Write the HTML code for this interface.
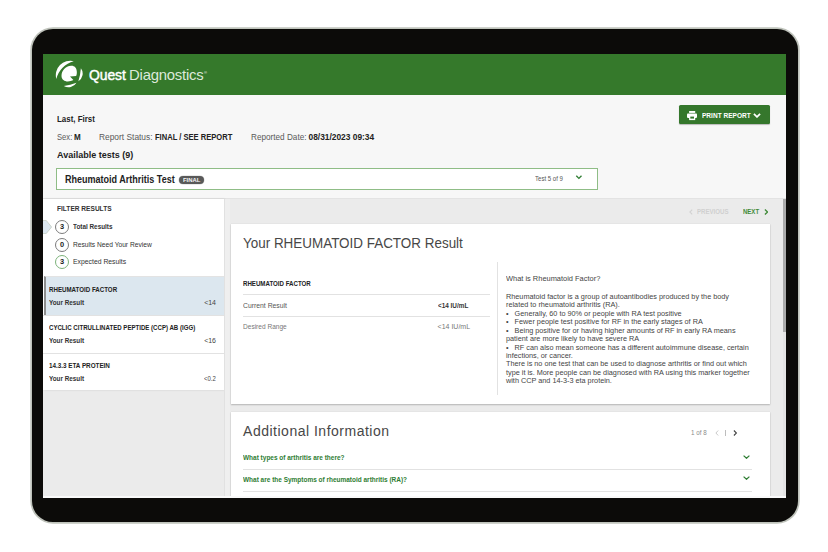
<!DOCTYPE html>
<html><head><meta charset="utf-8">
<style>
*{margin:0;padding:0;box-sizing:border-box}
html,body{width:828px;height:552px;overflow:hidden;background:#fff}
body{font-family:"Liberation Sans",sans-serif;position:relative;color:#222}
.a{position:absolute;white-space:nowrap;line-height:1}
#frame{position:absolute;left:31.8px;top:28.8px;width:766.2px;height:493.2px;background:#0c0b09;border-radius:21px;box-shadow:0 0 0 1.7px #bfc3bb}
#screen{position:absolute;left:43px;top:54px;width:743px;height:443.5px;background:#ebebeb;overflow:hidden}
#hdr{position:absolute;left:0;top:0;width:743px;height:41px;background:#35792b;z-index:2}
#info{position:absolute;left:0;top:40px;width:743px;height:104px;background:#f7f7f7}
b{font-weight:bold}
.g{color:#555}
#side{position:absolute;left:0;top:145px;width:181px;height:191px;background:#fff;box-shadow:1px 0 2px rgba(0,0,0,.12)}
.circ{position:absolute;width:14px;height:14px;border-radius:50%;border:1px solid #7c7c7c;background:#fff;font-size:7.4px;font-weight:bold;text-align:center;line-height:12px;color:#222}
.item{position:absolute;left:0;width:181px;height:37px;background:#fff;border-top:1px solid #e2e2e2}
.card{position:absolute;background:#fff;box-shadow:0 1px 1.5px rgba(0,0,0,.22),0 0 1px rgba(0,0,0,.12)}
.hr{position:absolute;height:1px;background:#e2e2e2}
.rt{position:absolute;left:505.9px;font-size:8px;line-height:8.48px;color:#444;white-space:nowrap}
</style></head><body>
<div id="frame"></div>
<div id="screen">
  <div id="hdr">
    <svg class="a" style="left:9px;top:3px" width="34" height="34" viewBox="0 0 34 34">
      <path d="M4.3 22 A14.5 14.5 0 0 1 21.8 4.2 A24 24 0 0 0 4.3 22 Z" fill="#fff"/>
      <path d="M28.9 11.3 A9 9 0 0 1 26.4 24.3 A60 60 0 0 0 28.9 11.3 Z" fill="#fff"/>
      <path d="M24.5 25.7 A9.2 9.2 0 0 1 11.8 28.9 A60 60 0 0 0 24.5 25.7 Z" fill="#fff"/>
      <path d="M19.2 8.8 C22.2 8.6 24.6 10.8 24.8 14.5 C25 16.8 24.6 18 24.1 18.9 L18 19.6 L21.4 23.1 C19.6 24.2 17 24.6 14.6 24.4 C11.2 24.1 9.4 21.6 9.5 18.6 C9.7 13.8 13.2 9.2 19.2 8.8 Z" fill="#fff"/>
    </svg>
    <div class="a" style="left:45.5px;top:13.5px;font-size:14.5px;color:#fff;-webkit-text-stroke:0.45px #fff;letter-spacing:-0.1px;transform:scaleX(0.96);transform-origin:0 0">Quest</div>
    <div class="a" style="left:86px;top:13.8px;font-size:14.5px;color:#dde9da;letter-spacing:-0.2px;transform:scaleX(1.025);transform-origin:0 0">Diagnostics</div>
    <div class="a" style="left:161px;top:16.5px;font-size:4px;color:#fff">®</div>
  </div>
  <div id="info">
    <div class="a" style="left:13.8px;top:20.6px;font-size:8.8px;font-weight:bold;transform:scaleX(0.9);transform-origin:0 0">Last, First</div>
    <div class="a" style="left:13.8px;top:38.6px;font-size:8.4px;color:#5a5a5a;transform:scaleX(0.91);transform-origin:0 0">Sex:</div>
    <div class="a" style="left:31.2px;top:38.6px;font-size:8.4px;font-weight:bold;transform:scaleX(0.96);transform-origin:0 0">M</div>
    <div class="a" style="left:56px;top:38.6px;font-size:8.4px;color:#5a5a5a">Report Status:</div>
    <div class="a" style="left:111.6px;top:38.6px;font-size:8.4px;font-weight:bold;transform:scaleX(0.904);transform-origin:0 0">FINAL / SEE REPORT</div>
    <div class="a" style="left:207.9px;top:38.6px;font-size:8.4px;color:#5a5a5a;transform:scaleX(0.977);transform-origin:0 0">Reported Date:</div>
    <div class="a" style="left:265.5px;top:38.6px;font-size:8.4px;font-weight:bold">08/31/2023 09:34</div>
    <div class="a" style="left:13.8px;top:56.2px;font-size:9.8px;font-weight:bold;transform:scaleX(0.92);transform-origin:0 0">Available tests (9)</div>
    <!-- print button -->
    <div class="a" style="left:636px;top:11.3px;width:91px;height:18.6px;background:#35772c;border-radius:1.5px;box-shadow:0 1px 1px rgba(0,0,0,.25)"></div>
    <svg class="a" style="left:643px;top:16px" width="12" height="11" viewBox="686 110 12 11">
      <rect x="689.1" y="111" width="6.1" height="1.9" fill="#fff"/>
      <rect x="687" y="113.5" width="10" height="4.4" rx="0.8" fill="#fff"/>
      <rect x="689.1" y="116" width="6.1" height="4.1" fill="#fff"/>
      <rect x="690.3" y="116.6" width="3.7" height="2" fill="#35772c"/>
    </svg>
    <div class="a" style="left:658.9px;top:17.5px;font-size:7px;font-weight:bold;color:#fff;transform:scaleX(0.935);transform-origin:0 0">PRINT REPORT</div>
    <svg class="a" style="left:710px;top:18.8px" width="8" height="5" viewBox="0 0 8 5"><path d="M0.9 0.9 L4 3.9 L7.1 0.9" fill="none" stroke="#fff" stroke-width="1.7"/></svg>
    <!-- test selector -->
    <div class="a" style="left:13.4px;top:73.7px;width:542px;height:22.8px;background:#fff;border:1px solid #8fbd86;border-bottom-width:1.6px"></div>
    <div class="a" style="left:21.9px;top:81px;font-size:10.2px;font-weight:bold;transform:scaleX(0.885);transform-origin:0 0">Rheumatoid Arthritis Test</div>
    <div class="a" style="left:136.2px;top:82.2px;width:24.6px;height:8px;border-radius:4px;background:#595959;box-shadow:0 0 0 0.6px #d8d8d8"></div><div class="a" style="left:139.6px;top:83.4px;font-size:6.2px;font-weight:bold;color:#f4f4f4;line-height:6px;transform:scaleX(0.95);transform-origin:0 0">FINAL</div>
    <div class="a" style="left:491.8px;top:81.5px;font-size:6.5px;color:#555;transform:scaleX(0.93);transform-origin:0 0">Test 5 of 9</div>
    <svg class="a" style="left:532px;top:80.6px" width="8" height="5" viewBox="0 0 8 5"><path d="M1.3 0.8 L3.9 3.4 L6.5 0.8" fill="none" stroke="#2e7d32" stroke-width="1.35"/></svg>
  </div>

  <div class="a" style="left:0;top:144px;width:743px;height:1px;background:#e3e3e3"></div>
  <!-- sidebar -->
  <div id="side">
    <div class="a" style="left:13.9px;top:5.8px;font-size:7.2px;font-weight:bold;color:#333;transform:scaleX(0.915);transform-origin:0 0">FILTER RESULTS</div>
    <svg class="a" style="left:0;top:21px" width="10" height="14" viewBox="0 0 10 14"><path d="M-1 0.4 L3.2 0.4 L8.6 7 L3.2 13.6 L-1 13.6 Z" fill="#dce7ef" stroke="#bcc6b8" stroke-width="0.7"/></svg>
    <div class="circ" style="left:12px;top:20.8px">3</div>
    <div class="a" style="left:30.3px;top:24px;font-size:7px;font-weight:bold;color:#333;transform:scaleX(0.91);transform-origin:0 0">Total Results</div>
    <div class="circ" style="left:12px;top:38.5px">0</div>
    <div class="a" style="left:30.3px;top:41.6px;font-size:7px;color:#333;transform:scaleX(0.95);transform-origin:0 0">Results Need Your Review</div>
    <div class="circ" style="left:12px;top:56.3px;border-color:#7db37a">3</div>
    <div class="a" style="left:30.3px;top:59px;font-size:7px;color:#333;transform:scaleX(0.976);transform-origin:0 0">Expected Results</div>

    <div class="item" style="top:77.3px;height:38.5px;left:0.8px;width:180.2px;background:#dce7ef;border-left:2px solid #8e8e8e;border-top:1px solid #e3e3e3"></div>
    <div class="a" style="left:5.9px;top:86.5px;font-size:7px;font-weight:bold;transform:scaleX(0.88);transform-origin:0 0">RHEUMATOID FACTOR</div>
    <div class="a" style="left:5.9px;top:99.8px;font-size:7px;font-weight:bold;color:#333;transform:scaleX(0.905);transform-origin:0 0">Your Result</div>
    <div class="a" style="right:8px;top:99.8px;font-size:7px;color:#444">&lt;14</div>

    <div class="item" style="top:116px"></div>
    <div class="a" style="left:5.9px;top:124.5px;font-size:7px;font-weight:bold;transform:scaleX(0.87);transform-origin:0 0">CYCLIC CITRULLINATED PEPTIDE (CCP) AB (IGG)</div>
    <div class="a" style="left:5.9px;top:138.2px;font-size:7px;font-weight:bold;color:#333;transform:scaleX(0.905);transform-origin:0 0">Your Result</div>
    <div class="a" style="right:8px;top:138.2px;font-size:7px;color:#444">&lt;16</div>

    <div class="item" style="top:153.5px"></div>
    <div class="a" style="left:5.9px;top:162.7px;font-size:7px;font-weight:bold;transform:scaleX(0.9);transform-origin:0 0">14.3.3 ETA PROTEIN</div>
    <div class="a" style="left:5.9px;top:176.3px;font-size:7px;font-weight:bold;color:#333;transform:scaleX(0.905);transform-origin:0 0">Your Result</div>
    <div class="a" style="right:8px;top:176.3px;font-size:7px;color:#444;transform:scaleX(0.85);transform-origin:100% 0">&lt;0.2</div>
  </div>

  <div class="a" style="left:180.8px;top:145px;width:6.6px;height:299px;background:#efefef;border-left:1px solid #e1e1e1"></div>
  <!-- content nav -->
  <svg class="a" style="left:646px;top:155px" width="4" height="6" viewBox="0 0 4 6"><path d="M3.2 0.6 L0.9 3 L3.2 5.4" fill="none" stroke="#d2d2d2" stroke-width="1.1"/></svg>
  <div class="a" style="left:654px;top:153.8px;font-size:7px;font-weight:bold;color:#d0d0d0;transform:scaleX(0.87);transform-origin:0 0">PREVIOUS</div>
  <div class="a" style="left:700.4px;top:153.8px;font-size:7px;font-weight:bold;color:#3f8a38;transform:scaleX(0.86);transform-origin:0 0">NEXT</div>
  <svg class="a" style="left:720.5px;top:155px" width="4.5" height="6" viewBox="0 0 4.5 6"><path d="M0.9 0.5 L3.5 3 L0.9 5.5" fill="none" stroke="#3f8a38" stroke-width="1.3"/></svg>

  <!-- scrollbar -->
  <div class="a" style="left:740px;top:145px;width:3px;height:298px;background:#e4e4e4"></div>
  <div class="a" style="left:739.7px;top:145px;width:3px;height:133px;background:#ababab"></div>

  <!-- card 1 -->
  <div class="card" style="left:187.7px;top:169.7px;width:539.3px;height:180.4px"></div>
  <div class="a" style="left:200.2px;top:181.6px;font-size:14px;color:#474747;transform:scaleX(0.96);transform-origin:0 0">Your RHEUMATOID FACTOR Result</div>
  <div class="a" style="left:200px;top:226px;font-size:7px;font-weight:bold;transform:scaleX(0.875);transform-origin:0 0">RHEUMATOID FACTOR</div>
  <div class="hr" style="left:200px;top:240px;width:247px"></div>
  <div class="a" style="left:200px;top:248.3px;font-size:7px;color:#555;transform:scaleX(0.974);transform-origin:0 0">Current Result</div>
  <div class="a" style="left:394.6px;top:248.3px;font-size:7px;font-weight:bold;color:#333;transform:scaleX(0.91);transform-origin:0 0">&lt;14 IU/mL</div>
  <div class="hr" style="left:200px;top:262px;width:247px"></div>
  <div class="a" style="left:200px;top:269.3px;font-size:7px;color:#777;transform:scaleX(0.936);transform-origin:0 0">Desired Range</div>
  <div class="a" style="left:394.6px;top:269.3px;font-size:7px;color:#777">&lt;14 IU/mL</div>
  <div class="hr" style="left:454.2px;top:208px;width:1px;height:132.5px"></div>

  <div class="rt" style="left:462.9px;top:221px;transform:scaleX(0.93);transform-origin:0 0">What is Rheumatoid Factor?</div>
  <div class="rt" style="left:462.9px;top:238.6px;transform:scaleX(0.91);transform-origin:0 0">Rheumatoid factor is a group of autoantibodies produced by the body<br>related to rheumatoid arthritis (RA).<br>&bull;&nbsp;&nbsp; Generally, 60 to 90% or people with RA test positive<br>&bull;&nbsp;&nbsp; Fewer people test positive for RF in the early stages of RA<br>&bull;&nbsp;&nbsp; Being positive for or having higher amounts of RF in early RA means<br>patient are more likely to have severe RA<br>&bull;&nbsp;&nbsp; RF can also mean someone has a different autoimmune disease, certain<br>infections, or cancer.<br>There is no one test that can be used to diagnose arthritis or find out which<br>type it is. More people can be diagnosed with RA using this marker together<br>with CCP and 14-3-3 eta protein.</div>

  <!-- card 2 -->
  <div class="card" style="left:187.7px;top:357.8px;width:539.3px;height:120px"></div>
  <div class="a" style="left:200.1px;top:370px;font-size:14px;color:#474747;letter-spacing:0.5px">Additional Information</div>
  <div class="a" style="left:648.4px;top:375.5px;font-size:6.8px;color:#8a8a8a;transform:scaleX(0.92);transform-origin:0 0">1 of 8</div>
  <svg class="a" style="left:671.5px;top:376px" width="4" height="6" viewBox="0 0 4 6"><path d="M3.2 0.5 L0.9 3 L3.2 5.5" fill="none" stroke="#c4c4c4" stroke-width="0.9"/></svg>
  <div class="a" style="left:681.6px;top:376px;width:1.2px;height:5.8px;background:#bdbdbd"></div>
  <svg class="a" style="left:690px;top:376px" width="4.5" height="6" viewBox="0 0 4.5 6"><path d="M0.9 0.5 L3.4 3 L0.9 5.5" fill="none" stroke="#444" stroke-width="1.1"/></svg>
  <div class="a" style="left:200.1px;top:399.8px;font-size:7px;font-weight:bold;color:#2e7d32;transform:scaleX(0.925);transform-origin:0 0">What types of arthritis are there?</div>
  <svg class="a" style="left:700px;top:400.5px" width="7" height="4" viewBox="0 0 7 4"><path d="M0.6 0.6 L3.5 3.3 L6.4 0.6" fill="none" stroke="#2e7d32" stroke-width="1.2"/></svg>
  <div class="hr" style="left:200px;top:415px;width:509px"></div>
  <div class="a" style="left:200.1px;top:421.5px;font-size:7px;font-weight:bold;color:#2e7d32;transform:scaleX(0.925);transform-origin:0 0">What are the Symptoms of rheumatoid arthritis (RA)?</div>
  <svg class="a" style="left:700px;top:422px" width="7" height="4" viewBox="0 0 7 4"><path d="M0.6 0.6 L3.5 3.3 L6.4 0.6" fill="none" stroke="#2e7d32" stroke-width="1.2"/></svg>
  <div class="hr" style="left:200px;top:436.7px;width:509px"></div>
  <div class="a" style="left:0;top:442px;width:743px;height:1.5px;background:#fafafa;z-index:3"></div>
</div>
</body></html>
